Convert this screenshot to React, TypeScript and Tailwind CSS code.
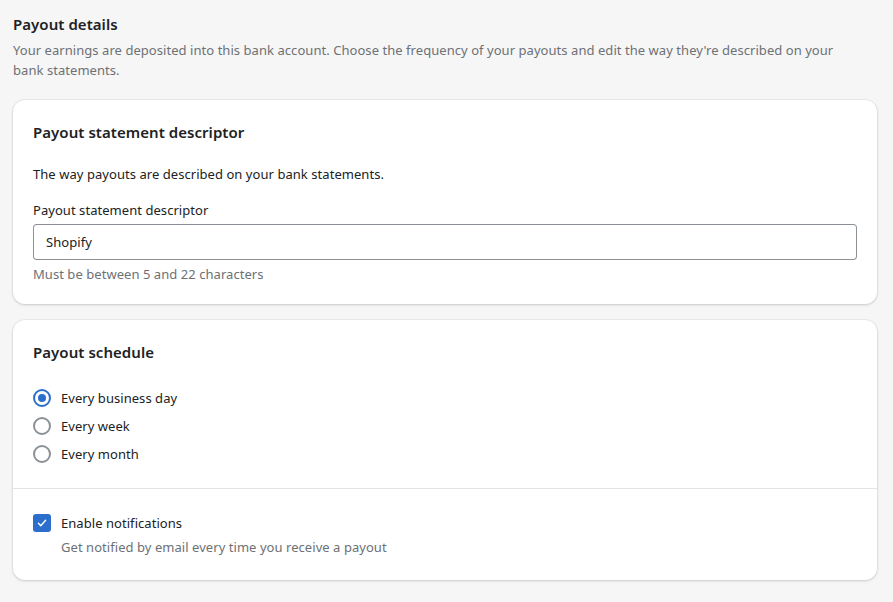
import { useState } from "react";

const options = ["Every business day", "Every week", "Every month"];

const Radio = ({ checked }: { checked: boolean }) => (
  <span
    className={`flex h-[18px] w-[18px] items-center justify-center rounded-full border-2 ${
      checked ? "border-[#2c6ecb]" : "border-[#8c9196]"
    }`}
  >
    {checked && <span className="h-[8px] w-[8px] rounded-full bg-[#2c6ecb]" />}
  </span>
);

export default function App() {
  const [schedule, setSchedule] = useState(0);
  const [notify, setNotify] = useState(true);

  return (
    <div
      className="min-h-screen bg-[#f6f6f7] pl-[13px] pr-4 pt-[14px] pb-5 text-[13px] leading-5 tracking-[0.05px] text-[#202223]"
      style={{ fontFamily: '"Noto Sans", "Open Sans", sans-serif' }}
    >
      <h1 className="text-[15px] font-semibold leading-5">Payout details</h1>
      <p className="mt-[6px] max-w-[840px] text-[#6d7175]">
        Your earnings are deposited into this bank account. Choose the frequency of your payouts and edit the way they're described on your bank statements.
      </p>

      <div className="mt-[20px] rounded-xl bg-white px-5 pt-[22px] pb-[20px] shadow-[0_0_0_1px_rgba(0,0,0,0.04),0_1px_3px_rgba(0,0,0,0.15)]">
        <h2 className="text-[15px] font-semibold leading-5">Payout statement descriptor</h2>
        <p className="mt-[22px]">The way payouts are described on your bank statements.</p>
        <label className="mt-4 block">Payout statement descriptor</label>
        <input
          defaultValue="Shopify"
          className="mt-[4px] block h-[36px] w-full rounded-[4px] border border-[#8c9196] border-t-[#898f94] px-3 text-[13px] text-[#202223] outline-none"
        />
        <p className="mt-[4px] text-[#6d7175]">Must be between 5 and 22 characters</p>
      </div>

      <div className="mt-4 rounded-xl bg-white shadow-[0_0_0_1px_rgba(0,0,0,0.04),0_1px_3px_rgba(0,0,0,0.15)]">
        <div className="px-5 pt-[22px] pb-[24px]">
          <h2 className="text-[15px] font-semibold leading-5">Payout schedule</h2>
          <div className="mt-[26px] flex flex-col gap-2">
            {options.map((o, i) => (
              <button
                key={o}
                onClick={() => setSchedule(i)}
                className="flex items-center gap-[10px] text-left"
              >
                <Radio checked={schedule === i} />
                <span>{o}</span>
              </button>
            ))}
          </div>
        </div>
        <div className="border-t border-[#e1e3e5] px-5 pt-[24px] pb-[23px]">
          <button onClick={() => setNotify(!notify)} className="flex items-center gap-[10px] text-left">
            <span
              className={`flex h-[18px] w-[18px] items-center justify-center rounded-[3px] ${
                notify ? "bg-[#2c6ecb]" : "border-2 border-[#8c9196]"
              }`}
            >
              {notify && (
                <svg viewBox="0 0 20 20" className="h-[12px] w-[12px]" fill="none" stroke="white" strokeWidth="2.4" strokeLinecap="round" strokeLinejoin="round">
                  <path d="M4 10.5l4 4 8-9" />
                </svg>
              )}
            </span>
            <span>Enable notifications</span>
          </button>
          <p className="mt-[4px] pl-[28px] text-[#6d7175]">Get notified by email every time you receive a payout</p>
        </div>
      </div>
    </div>
  );
}
